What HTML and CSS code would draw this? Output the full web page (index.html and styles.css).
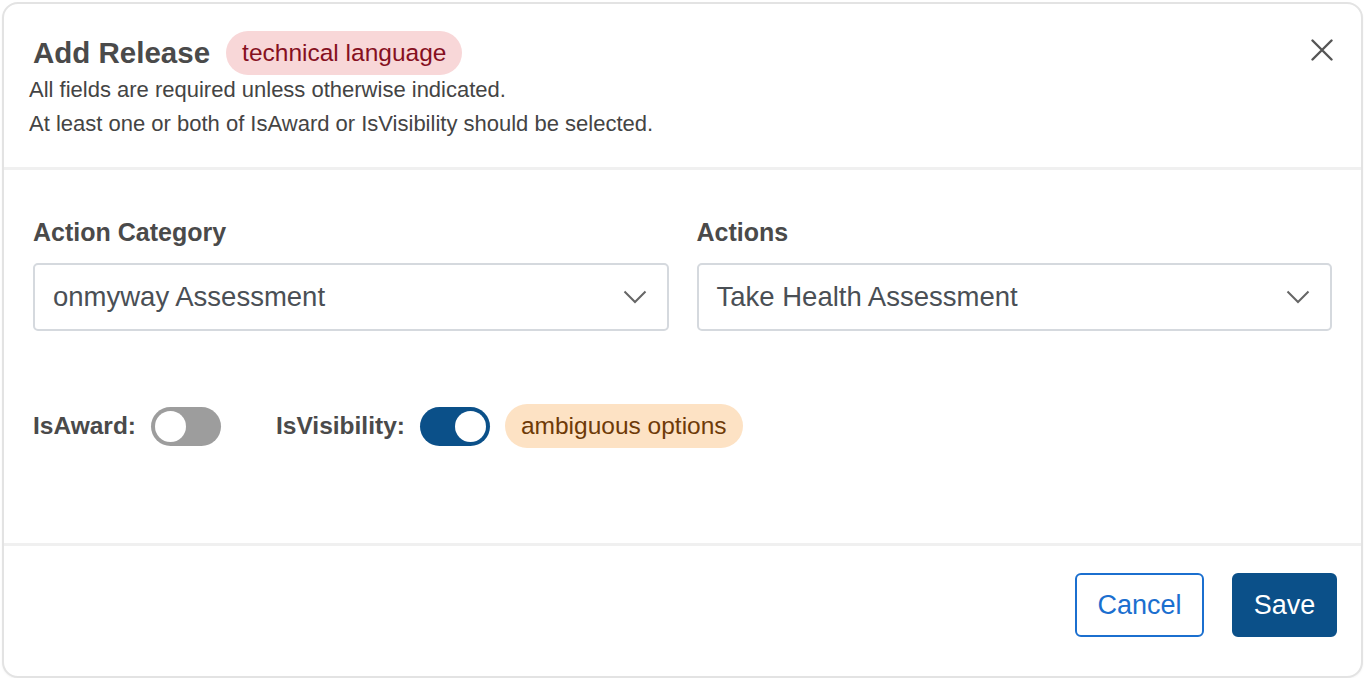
FILE: index.html
```html
<!DOCTYPE html>
<html lang="en">
<head>
  <meta charset="UTF-8" />
  <meta name="viewport" content="width=device-width, initial-scale=1.0"/>
  <title>Add Release</title>
  <link rel="stylesheet" href="styles.css">
</head>
<body>
  <div class="modal">
    <div class="modal-header">
      <div class="title-row">
        <h2>Add Release</h2>
        <span class="tag tag-red">technical language</span>
      </div>
      <p class="hint">All fields are required unless otherwise indicated.</p>
      <p class="hint">At least one or both of IsAward or IsVisibility should be selected.</p>
      <button class="close-btn" aria-label="Close">
        <svg width="22" height="22" viewBox="0 0 22 22"><path d="M1.5 1.5 L20.5 20.5 M20.5 1.5 L1.5 20.5" stroke="#555" stroke-width="2.4" stroke-linecap="round" fill="none"/></svg>
      </button>
    </div>

    <div class="modal-body">
      <div class="field-row">
        <div class="form-group">
          <label>Action Category</label>
          <div class="select">
            <span>onmyway Assessment</span>
            <svg width="24" height="14" viewBox="0 0 24 14"><path d="M1.5 1.5 L12 12 L22.5 1.5" stroke="#666" stroke-width="2" fill="none"/></svg>
          </div>
        </div>
        <div class="form-group">
          <label>Actions</label>
          <div class="select">
            <span>Take Health Assessment</span>
            <svg width="24" height="14" viewBox="0 0 24 14"><path d="M1.5 1.5 L12 12 L22.5 1.5" stroke="#666" stroke-width="2" fill="none"/></svg>
          </div>
        </div>
      </div>

      <div class="toggle-row">
        <div class="toggle-group">
          <span class="toggle-label">IsAward:</span>
          <span class="toggle"></span>
        </div>
        <div class="toggle-group">
          <span class="toggle-label">IsVisibility:</span>
          <span class="toggle on"></span>
          <span class="tag tag-orange">ambiguous options</span>
        </div>
      </div>
    </div>

    <div class="modal-footer">
      <button class="btn btn-outline">Cancel</button>
      <button class="btn btn-primary">Save</button>
    </div>
  </div>
</body>
</html>
```

FILE: styles.css
```css
:root {
  --text-dark: #4a4a4a;
  --text-body: #444444;
  --blue: #0b5089;
  --blue-light: #1b6fcf;
  --line: #f0f0f0;
  --font-family: "Liberation Sans", Arial, Helvetica, sans-serif;
}

* {
  box-sizing: border-box;
}

html, body {
  margin: 0;
  padding: 0;
  background: #ffffff;
}

body {
  font-family: var(--font-family);
  color: var(--text-body);
  padding: 2px 3px 0 2px;
}

.modal {
  height: 676px;
  border: 2px solid #e3e3e3;
  border-radius: 16px;
  background: #fff;
  display: flex;
  flex-direction: column;
  box-shadow: 0 1px 2px rgba(0, 0, 0, 0.05);
}

.modal-header {
  position: relative;
  padding: 27px 30px 0 25px;
  height: 166px;
  border-bottom: 3px solid var(--line);
}

.title-row {
  display: flex;
  align-items: center;
  gap: 16px;
  padding-left: 4px;
}

h2 {
  margin: 0;
  font-size: 29.5px;
  font-weight: bold;
  color: var(--text-dark);
}

.tag {
  display: inline-block;
  border-radius: 22px;
  font-size: 24.5px;
  line-height: 44px;
  height: 44px;
  padding: 0 16px;
}

.tag-red {
  background: #f8d7d8;
  color: #86101f;
}

.tag-orange {
  background: #fde2c4;
  color: #6e3a08;
}

.hint {
  margin: 0;
  font-size: 22px;
  line-height: 34px;
  color: var(--text-body);
}

.title-row + .hint {
  margin-top: -2px;
}

.close-btn {
  position: absolute;
  top: 35px;
  right: 28px;
  padding: 0;
  border: none;
  background: none;
  cursor: pointer;
}

.modal-body {
  flex: 1;
  padding: 46px 29px 0 29px;
}

.field-row {
  display: flex;
  gap: 28px;
}

.form-group {
  flex: 1;
  display: flex;
  flex-direction: column;
}

label {
  font-size: 25px;
  font-weight: bold;
  color: var(--text-dark);
  line-height: 32px;
  margin-bottom: 15px;
}

.select {
  height: 68px;
  border: 2px solid #d5d9de;
  border-radius: 5px;
  display: flex;
  align-items: center;
  justify-content: space-between;
  padding: 0 20px 0 18px;
  font-size: 27.5px;
  color: #4a4f55;
}

.toggle-row {
  display: flex;
  align-items: center;
  gap: 55px;
  margin-top: 73px;
}

.toggle-group {
  display: flex;
  align-items: center;
}

.toggle-label {
  font-size: 24.5px;
  font-weight: bold;
  color: var(--text-dark);
  margin-right: 15px;
}

.toggle {
  position: relative;
  display: inline-block;
  width: 70px;
  height: 39px;
  border-radius: 20px;
  background: #9d9d9d;
}

.toggle::after {
  content: "";
  position: absolute;
  top: 4px;
  left: 4px;
  width: 31px;
  height: 31px;
  border-radius: 50%;
  background: #fff;
}

.toggle.on {
  background: var(--blue);
  margin-right: 15px;
}

.toggle.on::after {
  left: 35px;
}

.modal-footer {
  border-top: 3px solid var(--line);
  display: flex;
  justify-content: flex-end;
  gap: 28px;
  padding: 27px 24px 39px 0;
}

.btn {
  height: 64px;
  font-family: var(--font-family);
  font-size: 27px;
  border-radius: 6px;
  cursor: pointer;
  padding: 0;
}

.btn-outline {
  background: #fff;
  border: 2px solid var(--blue-light);
  color: var(--blue-light);
  width: 129px;
}

.btn-primary {
  background: var(--blue);
  border: 2px solid var(--blue);
  color: #fff;
  width: 105px;
}
```
